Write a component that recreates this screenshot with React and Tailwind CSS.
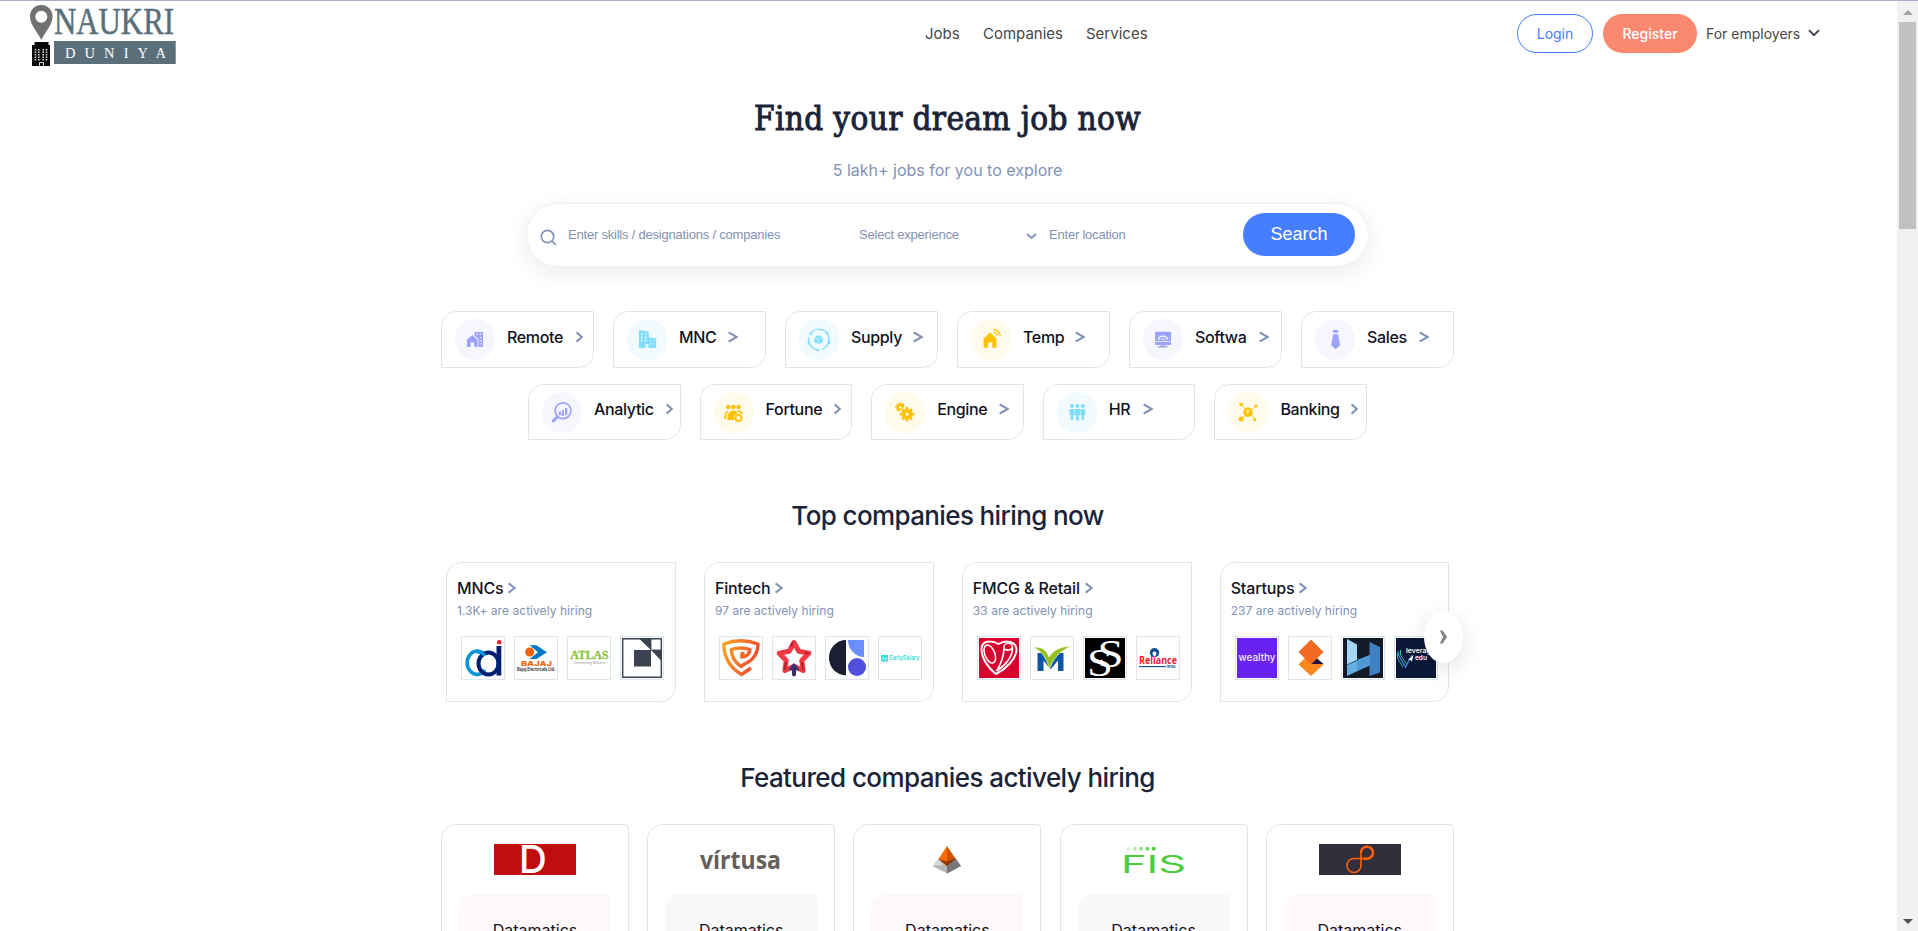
import React from "react";

const CHEV = "#8292b4";

function Gear({ cx, cy, r, hole, teeth = 8 }) {
  return (
    <g>
      {Array.from({ length: teeth }, (_, i) => (
        <rect key={i} x={cx - r * 0.2} y={cy - r * 1.28} width={r * 0.4} height={r} transform={`rotate(${(i * 360) / teeth} ${cx} ${cy})`} />
      ))}
      <circle cx={cx} cy={cy} r={(r + hole) / 2} fill="none" stroke="currentColor" strokeWidth={r - hole} />
    </g>
  );
}

const person = (x, y) => `M${x - 2.4} ${y}h4.8v6h-1v5h-2.8v-5h-1z`;

const icons = {
  remote: (
    <>
      <path d="M12 28v-7.2l5.3-4.8 5.3 4.8V28h-3.4v-4.5h-3.6V28z" />
      <path fillRule="evenodd" d="M19.5 13H28v15h-4.4v-7.8l-4.1-3.7zM21.4 14.5v1.4h1.4v-1.4zM24.6 14.5v1.4H26v-1.4zM24.8 17.8v1.4h1.4v-1.4zM25.4 21v1.4h1.4V21zM25.4 24.2v1.4h1.4v-1.4z" />
    </>
  ),
  mnc: (
    <path
      fillRule="evenodd"
      d="M12 11l9.8 1.4v5.8l7.4 1.2V29h-7.8v-3.8h-3V29H12zM14.2 13.8v2h1.2v-2zM18 13.8v2h1.2v-2zM14.2 17.2v2h1.2v-2zM18 17.2v2h1.2v-2zM14.2 20.6v2h1.2v-2zM18 20.6v2h1.2v-2zM23.6 21.2v1h1.100v-1zM26.400 21.200v1h1.100v-1zM23.600 24.300v1h1.100v-1zM26.400 24.300v1h1.100v-1z"
    />
  ),
  supply: (
    <>
      <circle cx="19.7" cy="20.5" r="10.3" fill="none" stroke="currentColor" strokeWidth="1.3" strokeDasharray="18.5 3.1" transform="rotate(-32 19.7 20.5)" />
      <path d="M9.700 15.500l3.400-2.800v3.800zM27 11.500l3.500 4-3.800-.2zM28.200 22.500l3.200-1.300-.2 4zM17.500 29.500l3.600 1.400-3 1.700zM8 22.200l3.200.6-1.600 3z" />
      <path d="M19.400 20.300v4.800l-4-1.800v-4.500zM19.900 20.300v4.800l4-1.800v-4.500zM19.600 16.300l4.200 1.800-4.200 1.800-4.200-1.800z" />
    </>
  ),
  temp: (
    <>
      <path d="M12.6 19.5l6.5-6.2 3.3 3.1 3.1 3.1v8.2a1 1 0 0 1-1 1h-3.3v-5.2h-4.1v5.2h-3.4a1 1 0 0 1-1-1z" />
      <path d="M22.4 13.4a4 4 0 0 1 3.8 3.8M22.6 10.5a7 7 0 0 1 6.6 6.6" fill="none" stroke="currentColor" strokeWidth="1.3" />
    </>
  ),
  software: (
    <>
      <path fillRule="evenodd" d="M13 12.8h14a1 1 0 0 1 1 1v8.4H12v-8.4a1 1 0 0 1 1-1zM14.6 20.6h10.8a5.4 4.2 0 0 0-10.8 0z" />
      <path d="M16.5 20.6a3.5 2.8 0 0 1 7 0h-2a1.5 1.3 0 0 0-3 0zM12 22.9h16v2a1 1 0 0 1-1 1H13a1 1 0 0 1-1-1zM17.5 26.2h5v1.1h2.7v1.2H14.800v-1.200h2.700z" />
    </>
  ),
  sales: <path d="M18 11h5.200v2.800H18zM18.300 15.200h4.800l2 11-4.400 4-4.600-4z" />,
  analytic: (
    <>
      <circle cx="21" cy="18.800" r="7.900" fill="none" stroke="currentColor" strokeWidth="1.700" />
      <path d="M15.200 25l-4 4" stroke="currentColor" strokeWidth="3" strokeLinecap="round" />
      <path d="M16.700 19.500h2.200v3.800h-2.200zM19.800 18H22v6h-2.200zM23.100 16h2.200v7.300h-2.200z" />
    </>
  ),
  fortune: (
    <>
      <circle cx="14.300" cy="15" r="2.300" />
      <circle cx="19.400" cy="15" r="2.300" />
      <circle cx="24.600" cy="15" r="2.300" />
      <path d="M10.300 27c0-4.500 1-8.500 4.500-8.500-2 2-2.600 5-2.700 8.500zM13.500 28c0-5 1-9.500 5.900-9.500 2.500 0 3.900 1.200 4.600 2.800-3 .3-4.800 3-3.700 6.700zM21.600 18.300h3c2.400 0 3.900 1.700 4.100 3.900l-3-1.100c-.8-1.500-2-2.300-4.100-2.800z" />
      <circle cx="24.400" cy="26" r="3" fill="none" stroke="currentColor" strokeWidth="1.900" />
    </>
  ),
  engine: (
    <>
      <Gear cx={15.300} cy={15.400} r={4} hole={1.900} />
      <circle cx="22" cy="22.200" r="7.600" fill="#fffbea" />
      <Gear cx={22} cy={22.200} r={5.700} hole={2.300} />
    </>
  ),
  hr: (
    <>
      {[15, 20.400, 25.800].map((x) => (
        <circle key={x} cx={x} cy={14} r="2" />
      ))}
      <path d={person(15, 17) + person(25.800, 17) + "M17.800 17h5.200v6.200h-1.100v5.300h-3v-5.300h-1.100z"} />
    </>
  ),
  banking: (
    <>
      <path d="M13 12.500l15 15.500M28 14L13 27" stroke="currentColor" strokeWidth="1" />
      <circle cx="20" cy="20.200" r="4.700" />
      <circle cx="13" cy="12.500" r="1.800" />
      <circle cx="28" cy="14" r="1.600" />
      <circle cx="13.200" cy="27" r="2.500" />
      <circle cx="26.700" cy="27.700" r="1.600" />
      <path d="M18.500 18.200h3M18.500 19.500h3M19.800 18.200v4" stroke="#fffbea" strokeWidth=".7" />
    </>
  ),
};

const tones = {
  purple: "bg-[#f6f6ff] text-[#9ba2f8]",
  cyan: "bg-[#f1fbff] text-[#83defc]",
  yellow: "bg-[#fffbea] text-[#ffc107]",
};

function Chevron({ w }) {
  return (
    <svg width={w} height="12" viewBox={`0 0 ${w} 12`} className="shrink-0" fill="none" stroke={CHEV} strokeWidth="2.100">
      <path d={`M.6 1.400L${w - 1.300} 6 .6 10.600`} />
    </svg>
  );
}

function Category({ icon, tone, label, textW, narrow, second }) {
  return (
    <div className={`flex shrink-0 rounded-tl-[15px] rounded-br-[15px] border border-[#dfe6ea] pl-[13px] ${second ? "h-[56px] w-[152.600px] pt-[7px]" : "h-[57px] w-[153px] pt-[7px]"}`}>
      <div className={`h-[41px] w-10 shrink-0 rounded-full ${tones[tone]}`}>
        <svg width="40" height="41" viewBox="0 0 40 41" fill="currentColor">{icons[icon]}</svg>
      </div>
      <div className={`ml-[12px] flex h-[24px] items-center ${second ? "mt-[5px]" : "mt-[6px]"}`}>
        <span className="whitespace-nowrap text-[16px] font-medium tracking-[-0.350px] text-[#121224]" style={{ width: textW + 13 }}>{label}</span>
        <Chevron w={narrow ? 7 : 10} />
      </div>
    </div>
  );
}

const row1 = [
  ["remote", "purple", "Remote", 55.500, true],
  ["mnc", "cyan", "MNC", 36],
  ["supply", "cyan", "Supply", 49],
  ["temp", "yellow", "Temp", 39],
  ["software", "purple", "Softwa", 51],
  ["sales", "purple", "Sales", 39],
];
const row2 = [
  ["analytic", "purple", "Analytic", 58.500, true],
  ["fortune", "yellow", "Fortune", 55.500, true],
  ["engine", "yellow", "Engine", 49],
  ["hr", "cyan", "HR", 21],
  ["banking", "yellow", "Banking", 57.500, true],
];

const L = {
  cdi: (
    <>
      <path d="M22 17.500A10 11.700 0 1 0 22 32" fill="none" stroke="#0a94d8" strokeWidth="3.600" />
      <ellipse cx="25.500" cy="25.500" rx="10" ry="11" fill="none" stroke="#001f73" strokeWidth="4" />
      <path d="M13.500 13.800q5 0 8.500 3.700" fill="none" stroke="#0a94d8" strokeWidth="3.600" />
      <rect x="33.500" y="8" width="4.800" height="29.500" fill="#001f73" />
      <circle cx="36.200" cy="4.300" r="2.300" fill="#ee2030" />
    </>
  ),
  bajaj: (
    <>
      <path d="M13.500 7.300h7L31 14.300 20.500 21h-7l8.500-6.700z" fill="#0079c8" />
      <circle cx="13.700" cy="14" r="4.500" fill="#f4600c" />
      <text x="5" y="27.500" textLength="31" lengthAdjust="spacingAndGlyphs" fontSize="6.800" fontWeight="800" fill="#f4600c">BAJAJ</text>
      <text x="1" y="32.500" textLength="38.500" lengthAdjust="spacingAndGlyphs" fontSize="4.200" fontWeight="700" fill="#333">Bajaj Electricals Ltd.</text>
    </>
  ),
  atlas: (
    <>
      <text x="1.500" y="21.300" textLength="38" lengthAdjust="spacingAndGlyphs" fontSize="11.500" fontWeight="700" fill="#8ec63f" stroke="#8ec63f" strokeWidth=".4" fontFamily="Liberation Serif, serif">ATLAS</text>
      <text x="5" y="26" textLength="31" fontSize="3" fill="#888">Connecting Millions</text>
    </>
  ),
  frame: (
    <>
      <path d="M.7.700h38.600v38.600H.700z" fill="#fff" stroke="#3b4252" strokeWidth="1.400" />
      <path d="M12 12h17v16.500H12zM17.500 1H29v11zM29 12h10.500v11z" fill="#3b4252" />
      <path d="M29 1v11h10.500" fill="none" stroke="#3b4252" strokeWidth=".8" />
    </>
  ),
  shield: (
    <>
      <defs>
        <linearGradient id="sh" x1="0" x2="1" y1="0" y2=".3"><stop stopColor="#fba524" /><stop offset="1" stopColor="#ee4f30" /></linearGradient>
      </defs>
      <g fill="none" stroke="url(#sh)" strokeWidth="3.400" strokeLinejoin="round">
        <path d="M30 30l-9.500 6.500C9.500 30 3 20 2.800 6c11.200-4.300 23-4.300 34.200 0-.3 9-5 16.500-13.500 20l-3.500 2.500C13.500 24 10.500 18 10.300 11.500c6.500-2 12.500-2 18.700 0-.4 4.500-3 7-8.300 7.500l.3-3.500h2.500" />
      </g>
    </>
  ),
  star: (
    <>
      <path d="M20 4.500l4.800 8.800 10 1.900-7 7.300 1.300 10-9.100-4.300-9.100 4.300 1.300-10-7-7.300 10-1.900z" fill="none" stroke="#f03a45" strokeWidth="5" strokeLinejoin="round" />
      <path d="M17 8.500l2-4.500M31 14.500l4 1M12 24l-1.500 8M28 24l1 8" stroke="#b3202d" strokeWidth="2" />
      <path d="M20 25l-5.500 6.500 3.500 1v4.500q2 3 4 0v-4.500l3.500-1z" fill="#3c2c70" />
    </>
  ),
  shapes: (
    <>
      <path d="M19 2v35.300A17 17.600 0 0 1 19 2z" fill="#1b1f33" />
      <path d="M21 2h16v17A16 17 0 0 1 21 2z" fill="#6b8fff" />
      <circle cx="30" cy="29" r="9" fill="#524fdc" />
    </>
  ),
  early: (
    <>
      <rect x="1" y="17" width="7" height="6.500" fill="#2fe0d8" />
      <text x="2" y="21.800" fontSize="4" fill="#fff">ES</text>
      <text x="9.500" y="22.300" textLength="30" lengthAdjust="spacingAndGlyphs" fontSize="5.600" fontWeight="600" fill="#2fe0d8">EarlySalary</text>
    </>
  ),
  heart: (
    <>
      <rect width="40" height="40" fill="#d8002f" />
      <path d="M17 36C9 30 2.500 20 2.500 11 2.500 3 12 1.500 19.500 6 27 1.500 37.500 3 37.500 12 37 21 27 31 17 36z" fill="none" stroke="#fff" strokeWidth="2" />
      <ellipse cx="10.800" cy="16" rx="5" ry="9.500" transform="rotate(-22 10.800 16)" fill="none" stroke="#fff" strokeWidth="1.500" />
      <path d="M17.500 33C27 27 34 18 33.500 9.500a4.200 4.200 0 0 0-8.500 0c0 8-2 15-7.500 23.500M25 11c4 2 7 1 8.500-1.500" fill="none" stroke="#fff" strokeWidth="1.600" />
    </>
  ),
  leaf: (
    <>
      <path d="M5.500 15h5l8 10 8-10h5v18H26V22.500L18.500 31.500l-7-9V33h-6z" fill="#0d55a5" />
      <path d="M1.500 9.500c7-1.500 13 2 15.500 9.500C21 12.500 29 8 39.500 8.300 28 12.500 20.500 21 17.500 32 15.500 22 10 13 1.500 9.500z" fill="#95c11f" stroke="#fff" strokeWidth=".6" />
    </>
  ),
  ss: (
    <>
      <rect width="40" height="40" fill="#000" />
      <g fill="#fff" fontFamily="Liberation Serif, serif" fontSize="40">
        <text x="2" y="37.500" textLength="26" lengthAdjust="spacingAndGlyphs">S</text>
        <text x="12.500" y="28.500" textLength="26" lengthAdjust="spacingAndGlyphs">S</text>
      </g>
    </>
  ),
  reliance: (
    <>
      <circle cx="16.500" cy="14.800" r="4.700" fill="#0d4d92" />
      <path d="M16.500 20l-2-4.500a2 2 0 1 1 4 0z" fill="#fff" />
      <text x="1" y="25.800" textLength="38" lengthAdjust="spacingAndGlyphs" fontSize="10.500" fontWeight="700" fill="#ee2036" fontFamily="Open Sans, sans-serif">Reliance</text>
      <path d="M1 28.600h27" stroke="#0d4d92" strokeWidth="1.100" />
      <text x="29" y="29.800" textLength="9" fontSize="3" fill="#0d4d92" fontWeight="700">RETAIL</text>
    </>
  ),
  wealthy: (
    <>
      <rect width="40" height="40" fill="#6a22f2" />
      <text x="1.500" y="22.500" textLength="37" lengthAdjust="spacingAndGlyphs" fontSize="10" fontWeight="500" fill="#f1e8ff">wealthy</text>
    </>
  ),
  diamond: (
    <>
      <path d="M21 14l12.500 12.500L21 38 8.500 26.500z" fill="#f8881f" />
      <path d="M21 1.500L33.500 14 21 26.500 8.500 14z" fill="#f26a21" />
      <path d="M21.500 26l5.500-5.500 6.500 5.500z" fill="#1f1646" />
    </>
  ),
  h: (
    <>
      <rect width="40" height="40" fill="#131a28" />
      <path d="M4 1l10 5.500v15.500L4 26.500z" fill="#a4d5f5" />
      <path d="M4 27l33-14v9.500L4 38z" fill="#66aee2" />
      <path d="M26.500 4L37 9v25.500L26.500 38z" fill="#3f80c4" />
      <path d="M14 22l12.500-5v10.500L14 33z" fill="#4f9ad6" />
    </>
  ),
  edu: (
    <>
      <rect width="40" height="40" fill="#0b1838" />
      <path d="M2.500 13v4l7 12L16 17" fill="none" stroke="#3b7fd4" strokeWidth="1.400" />
      <path d="M1.500 15v5l5.500 9.500M4.500 12v5l6 9" fill="none" stroke="#38b58c" strokeWidth="1" />
      <path d="M12 22l5.500-5-1.500 6.500-1.500-1.500z" fill="#fff" />
      <g fill="#fff" fontWeight="600" fontSize="6.500">
        <text x="10" y="15" textLength="29" lengthAdjust="spacingAndGlyphs">leverage</text>
        <text x="19" y="21.500">edu</text>
      </g>
    </>
  ),
};

const groups = [
  ["MNCs", "1.3K+ are actively hiring", ["cdi", "bajaj", "atlas", "frame"], 46],
  ["Fintech", "97 are actively hiring", ["shield", "star", "shapes", "early"], 55.500],
  ["FMCG & Retail", "33 are actively hiring", ["heart", "leaf", "ss", "reliance"], 107.500],
  ["Startups", "237 are actively hiring", ["wealthy", "diamond", "h", "edu"], 63.500],
];

const featured = [
  <svg width="82" height="31" viewBox="0 0 82 31" className="shrink-0">
    <rect width="82" height="31" fill="#c00d0f" />
    <text x="25" y="29" fontSize="38.500" fontWeight="500" fill="#fff">D</text>
  </svg>,
  <svg width="82" height="31" viewBox="0 0 82 31" className="shrink-0">
    <text x="0" y="24.500" textLength="81" lengthAdjust="spacingAndGlyphs" fontSize="25" fontWeight="700" fill="#655f59" fontFamily="Open Sans, sans-serif">vírtusa</text>
  </svg>,
  <svg width="82" height="31" viewBox="0 0 82 31" className="shrink-0">
    <path d="M33 14.500L26.500 22 41 29.500 55 22l-6.500-7.500z" fill="#b5b5b5" />
    <path d="M41 18v11.500L55 22l-5.500-8z" fill="#777" />
    <path d="M26.500 22l6-6.500L37 21z" fill="#d8d8d8" />
    <path d="M41 2l-8.500 13L41 22z" fill="#ff6a05" />
    <path d="M41 2l8.500 12.500L41 22z" fill="#cf5304" />
    <path d="M32.500 15l8.500 2.500 8.500-3L41 22z" fill="#6a2b05" opacity=".75" />
  </svg>,
  <svg width="82" height="31" viewBox="0 0 82 31" className="shrink-0">
    {[0, 1, 2, 3, 4].map((i) => (
      <circle key={i} cx={15.500 + i * 6.300} cy="4.800" r="2" fill="#4bcd3e" opacity={0.2 + i * 0.2} />
    ))}
    <text x="8" y="28.500" textLength="65" lengthAdjust="spacingAndGlyphs" fontSize="24" fontWeight="400" fill="#4bcd3e">FIS</text>
  </svg>,
  <svg width="82" height="31" viewBox="0 0 82 31" className="shrink-0">
    <rect width="82" height="31" fill="#332e3b" />
    <path d="M42 14.500h6a6 6 0 1 0-6-6v13a7 7 0 1 1-7-7h7" fill="none" stroke="#ff6105" strokeWidth="1.600" />
    <path d="M44 14.700h4a6 6 0 1 0-6-6" fill="none" stroke="#ff6105" strokeWidth="2.400" />
  </svg>,
];

function Header() {
  return (
    <header className="flex h-[67px] items-start">
      <svg width="155" height="66" viewBox="0 1 155 66" className="ml-[25px] shrink-0">
        <path fillRule="evenodd" d="M16.300 5C9.800 5 5 9.900 5 16.300 5 25 12 31 16.300 40 20.600 31 27.600 25 27.600 16.300 27.600 9.900 22.800 5 16.300 5zM16.300 10.800a6 6 0 1 1 0 12 6 6 0 0 1 0-12z" fill="#6f7173" />
        <path d="M9.500 42h14v3H25v21H7V45h2.500z" fill="#080808" />
        <path d="M10.500 49v12M13.800 49v12M18.200 49v12M21.500 49v12" stroke="#ddd" strokeWidth="1.600" strokeDasharray="1.500 1" />
        <path d="M14.500 66v-3.500h4V66" fill="none" stroke="#eee" strokeWidth=".9" />
        <text x="29" y="33.500" textLength="120" lengthAdjust="spacingAndGlyphs" fontFamily="Liberation Serif, serif" fontSize="37.500" fill="#5a6f7a" stroke="#5a6f7a" strokeWidth=".5">NAUKRI</text>
        <rect x="29" y="41" width="121.700" height="23" fill="#5a6f7a" />
        <text x="40" y="58" textLength="101" fontFamily="Liberation Serif, serif" fontSize="14.500" fill="#fff">DUNIYA</text>
      </svg>
      <nav className="ml-[745px] mt-[22px] flex text-[15px] leading-[22px] text-[#474747]">
        <span className="w-[58px]">Jobs</span>
        <span className="w-[103px]">Companies</span>
        <span className="w-[62px]">Services</span>
      </nav>
      <div className="ml-[369px] mt-[13px] flex text-[14px] leading-[37px]">
        <button className="h-[39px] w-[76px] rounded-[20px] border border-[#457eff] pb-px text-[#457eff]">Login</button>
        <button className="ml-[10px] h-[39px] w-[94px] rounded-[20px] bg-[#fa8970] pb-px font-medium text-white">Register</button>
        <div className="ml-[10px] flex w-[114px] items-center text-[#474747]">
          <span className="-ml-px w-[102px] whitespace-nowrap">For employers</span>
          <svg width="12" height="8" viewBox="0 0 12 8" className="-mt-[2px]" fill="none" stroke="#3a3f4c" strokeWidth="1.800"><path d="M1 1.200l5 5 5-5" /></svg>
        </div>
      </div>
    </header>
  );
}

export default function App() {
  return (
    <div className="flex h-[931px] w-[1918px] flex-col overflow-hidden border-t border-[#a3afcb] bg-white font-['Inter',sans-serif] text-[#1b2437]">
      <div className="flex h-[930px]">
        <main className="h-[930px] w-[1897px] overflow-hidden">
          <Header />
          <h1 className="mt-[31px] h-[38px] w-[1895px] text-center font-['Roboto_Slab','DejaVu_Serif_Condensed','DejaVu_Serif',serif] text-[33px] font-medium leading-[40px] tracking-[0.350px] text-[#1b2338] [-webkit-text-stroke:0.900px_#1b2338]">Find your dream job now</h1>
          <p className="mt-[21px] w-[1895px] text-center text-[16px] leading-[24px] text-[#8292b4]">5 lakh+ jobs for you to explore</p>
          <div className="ml-[526px] mt-[21px] flex h-[64px] w-[843px] rounded-full border border-[#edf2f5] bg-white pl-[13px] font-['Liberation_Sans',sans-serif] text-[13px] leading-[20px] tracking-[-0.210px] text-[#8292b4] shadow-[0_6px_22px_rgba(20,30,60,0.09)]">
            <svg width="17" height="17" viewBox="0 0 17 17" className="mt-[25px] shrink-0" fill="none" stroke="#8292b4" strokeWidth="1.700"><circle cx="7.500" cy="7.500" r="6.200" /><path d="M12 12l4 4" /></svg>
            <span className="ml-[11px] mt-[21px] w-[291px] whitespace-nowrap">Enter skills / designations / companies</span>
            <span className="mt-[21px] w-[167px]">Select experience</span>
            <svg width="11" height="7" viewBox="0 0 11 7" className="mt-[29px] shrink-0" fill="none" stroke="#8292b4" strokeWidth="2"><path d="M1 1l4.500 4L10 1" /></svg>
            <span className="ml-[12px] mt-[21px] w-[194px]">Enter location</span>
            <button className="mt-[9px] h-[43px] w-[112px] rounded-full bg-[#457eff] pb-[2px] text-[18px] tracking-normal text-white">Search</button>
          </div>
          <div className="ml-[441px] mt-[44px] flex gap-[19px]">
            {row1.map((r) => <Category key={r[2]} icon={r[0]} tone={r[1]} label={r[2]} textW={r[3]} narrow={r[4]} />)}
          </div>
          <div className="ml-[528px] mt-[16px] flex gap-[19px]">
            {row2.map((r) => <Category key={r[2]} icon={r[0]} tone={r[1]} label={r[2]} textW={r[3]} narrow={r[4]} second />)}
          </div>
          <h2 className="mt-[60px] w-[1895px] text-center text-[26px] font-medium leading-[32px] tracking-[-0.620px]">Top companies hiring now</h2>
          <section className="relative ml-[446px] mt-[30px] flex gap-[28.100px]">
            {groups.map(([t, s, logos, w]) => (
              <div key={t} className="h-[140px] w-[229.800px] shrink-0 rounded-tl-[15px] rounded-br-[15px] border border-[#dfe6ea] pl-[10px] pt-[14px]">
                <div className="flex h-[22px] items-center whitespace-nowrap text-[16px] font-medium tracking-[-0.150px] text-[#121224]">
                  <span style={{ width: w + 5 }}>{t}</span>
                  <Chevron w={8} />
                </div>
                <p className="mt-[3px] text-[12px] leading-[18px] tracking-[0.050px] text-[#8292b4]">{s}</p>
                <div className="ml-[4px] mt-[16px] flex gap-[9px]">
                  {logos.map((l) => (
                    <div key={l} className="h-11 w-11 border border-[#dfe6ea] p-px">
                      <svg width="40" height="40" viewBox="0 0 40 40">{L[l]}</svg>
                    </div>
                  ))}
                </div>
              </div>
            ))}
            <button className="absolute left-[978px] top-[49px] flex h-[52px] w-[39px] items-center justify-center rounded-[50%] bg-white shadow-[0_6px_22px_rgba(20,30,60,0.13)]">
              <svg width="9" height="14" viewBox="0 0 9 15" fill="#85858a"><path d="M.5.500h3l5 7-5 7h-3l3.500-7z" /></svg>
            </button>
          </section>
          <h2 className="mt-[60px] w-[1895px] text-center text-[26px] font-medium leading-[32px] tracking-[-0.590px]">Featured companies actively hiring</h2>
          <section className="ml-[441px] mt-[30px] flex gap-[18.200px]">
            {featured.map((logo, i) => (
              <div key={i} className="flex h-[260px] w-[188px] shrink-0 flex-col items-center overflow-hidden rounded-tl-[15px] rounded-tr-[4px] border border-[#dfe6ea] pt-[19px]">
                {logo}
                <div className={`mt-[19px] h-[180px] w-[152px] shrink-0 rounded-tl-[15px] rounded-tr-[4px] pt-[24px] text-center text-[16px] leading-[24px] text-[#121224] ${i % 2 ? "bg-[#f8f8f8]" : "bg-[#fff8f8]"}`}>Datamatics</div>
              </div>
            ))}
          </section>
        </main>
        <aside className="flex h-[930px] w-[21px] flex-col items-center bg-[#f1f1f1]">
          <svg width="10" height="5" viewBox="0 0 10 5" className="mt-[9px]" fill="#a3a3a3"><path d="M0 5l5-5 5 5z" /></svg>
          <div className="mt-[7px] h-[207px] w-[17px] bg-[#c1c1c1]" />
          <svg width="10" height="5" viewBox="0 0 10 5" className="mb-[7px] mt-auto" fill="#505050"><path d="M0 0l5 5 5-5z" /></svg>
        </aside>
      </div>
    </div>
  );
}
